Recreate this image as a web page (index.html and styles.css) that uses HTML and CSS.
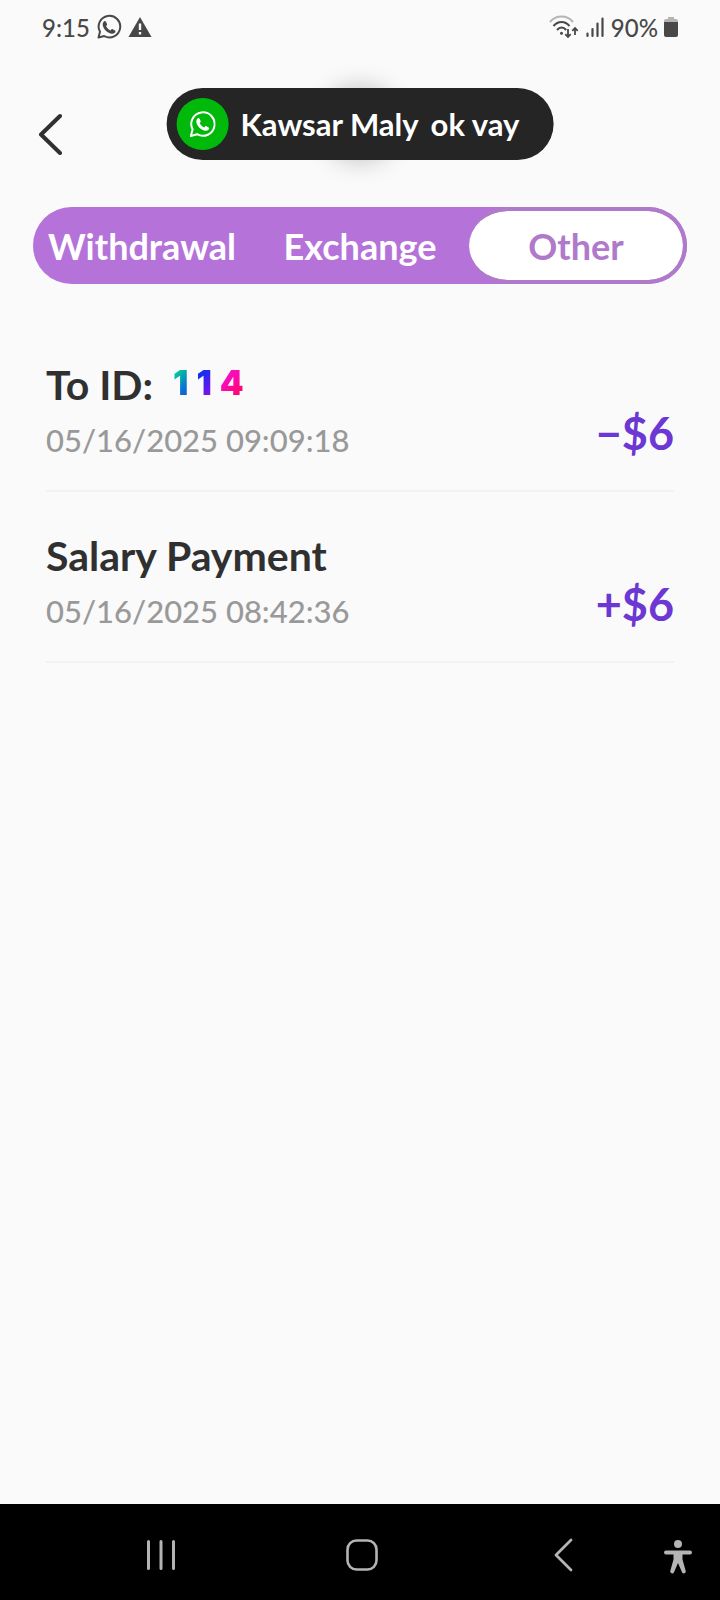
FILE: index.html
```html
<!DOCTYPE html>
<html lang="en">
<head>
<meta charset="utf-8">
<meta name="viewport" content="width=device-width, initial-scale=1">
<title>Records</title>
<link rel="stylesheet" href="styles.css">
</head>
<body>
<div class="status-bar">
  <div class="status-group">
    <span class="clock">9:15</span>
    <svg class="icon" width="26" height="26" viewBox="0 0 26 26" fill="none">
      <path d="M2.5 23.5 L4 17.8 A10.8 10.8 0 1 1 8.2 22 Z" stroke="currentColor" stroke-width="2" stroke-linejoin="round"/>
      <path d="M7.3 8.2c.8-1.5 2-1.8 2.700-.5l1 2.300c.3.800-.2 1.300-1 2 1.200 2.300 2.500 3.500 4.700 4.400.8-1 1.200-1.500 2-1.200l2.300 1.200c.8.500.6 1.500-.2 2.300-1.500 1.500-3.800 1.300-6.500-.2-3.200-1.800-7.100-6.800-5-10.300z" fill="currentColor"/>
    </svg>
    <svg class="icon" width="24" height="22" viewBox="0 0 24 22">
      <path d="M12 1 23.500 21H.5Z" fill="currentColor"/>
      <path d="M10.800 7.500h2.400v6.500h-2.400zM10.800 16h2.400v2.400h-2.400z" fill="#fafafa"/>
    </svg>
  </div>
  <div class="status-group">
    <svg class="icon" width="30" height="24" viewBox="0 0 30 24" fill="none" stroke="currentColor" stroke-width="2">
      <path d="M1 7C7-.2 18-.2 24 7" stroke="#b4b4b4"/>
      <path d="M4.500 11c4.500-5.500 11.500-5.500 16 0M8 15c2.800-3.300 6.400-3.300 9.200 0"/>
      <circle cx="12.500" cy="18.300" r="1.500" fill="currentColor" stroke="none"/>
      <path d="M19 14v8M16.300 19.200 19 22l2.700-2.800M26 20v-7M23.300 15.800 26 13l2.700 2.800" stroke-width="1.800"/>
    </svg>
    <svg class="icon" width="20" height="22" viewBox="0 0 20 22" stroke="currentColor" stroke-width="2.200" stroke-linecap="round">
      <path d="M2.500 17.500V20M7.500 13v7M12.500 7.500V20M17.500 2.500V20"/>
    </svg>
    <span class="battery-level">90%</span>
    <svg class="icon" width="14" height="22" viewBox="0 0 14 22">
      <path d="M4 1h6v2h2a2 2 0 0 1 2 2v2H0V5a2 2 0 0 1 2-2h2z" fill="#b4b4b4"/>
      <path d="M0 6h14v13a2 2 0 0 1-2 2H2a2 2 0 0 1-2-2z" fill="currentColor"/>
    </svg>
  </div>
</div>

<header class="header">
  <button class="back" type="button" aria-label="Back">
    <svg width="26" height="42" viewBox="0 0 26 42" fill="none" stroke="#303030" stroke-width="4" stroke-linecap="round" stroke-linejoin="round"><path d="M22 3 3 21.500 22 40"/></svg>
  </button>
  <div class="toast" role="status">
    <span class="toast-icon">
      <svg width="26" height="26" viewBox="0 0 26 26" fill="none" color="#fff">
        <path d="M1.200 25 3 18.500A11.700 11.700 0 1 1 7.500 23.200Z" stroke="currentColor" stroke-width="2" stroke-linejoin="round"/>
        <path d="M7.300 8.200c.8-1.500 2-1.800 2.700-.5l1 2.300c.3.800-.2 1.300-1 2 1.200 2.300 2.500 3.500 4.700 4.400.8-1 1.200-1.500 2-1.200l2.300 1.200c.8.500.6 1.500-.2 2.300-1.500 1.500-3.800 1.300-6.500-.2-3.200-1.800-7.100-6.800-5-10.300z" fill="currentColor"/>
      </svg>
    </span>
    <span class="toast-text"><span>Kawsar Maly</span><span>ok vay</span></span>
  </div>
</header>

<main>
  <div class="tabs" role="tablist">
    <button class="tab" type="button" role="tab" aria-selected="false">Withdrawal</button>
    <button class="tab" type="button" role="tab" aria-selected="false">Exchange</button>
    <button class="tab tab-active" type="button" role="tab" aria-selected="true">Other</button>
  </div>
  <ul class="records">
    <li class="record">
      <div>
        <div class="record-title">To ID: <span class="user-id"><span class="digit-a">1</span><span class="digit-b">1</span><span class="digit-c">4</span></span></div>
        <time class="record-date">05/16/2025 09:09:18</time>
      </div>
      <span class="amount">−$6</span>
    </li>
    <li class="record">
      <div>
        <div class="record-title">Salary Payment</div>
        <time class="record-date">05/16/2025 08:42:36</time>
      </div>
      <span class="amount">+$6</span>
    </li>
  </ul>
</main>

<nav class="system-nav" aria-label="System">
  <button class="nav-button" type="button" aria-label="Recent apps">
    <svg width="30" height="32" viewBox="0 0 30 32" stroke="#b4b4b4" stroke-width="3" stroke-linecap="round"><path d="M2.500 2.500v27M15 2.500v27M27.500 2.500v27"/></svg>
  </button>
  <button class="nav-button" type="button" aria-label="Home">
    <svg width="32" height="32" viewBox="0 0 32 32" fill="none" stroke="#b4b4b4" stroke-width="2.600"><rect x="1.500" y="1.500" width="29" height="29" rx="9"/></svg>
  </button>
  <button class="nav-button" type="button" aria-label="Back">
    <svg width="20" height="34" viewBox="0 0 20 34" fill="none" stroke="#b4b4b4" stroke-width="2.800" stroke-linecap="round" stroke-linejoin="round"><path d="M18 2 3 17l15 15"/></svg>
  </button>
  <button class="nav-button nav-access" type="button" aria-label="Accessibility">
    <svg width="28" height="38" viewBox="0 0 28 38" fill="#b4b4b4"><circle cx="14" cy="8" r="4"/><path d="M2 14.500h24a2 2 0 0 1 0 4h-7.500v5l3.300 11.800a2 2 0 0 1-3.700 1.200L14 27l-4.100 9.500a2 2 0 0 1-3.700-1.200L9.500 23.500v-5H2a2 2 0 0 1 0-4z"/></svg>
  </button>
</nav>
</body>
</html>
```

FILE: styles.css
```css
* { box-sizing: border-box; }

body {
  margin: 0;
  min-height: 100vh;
  display: flex;
  flex-direction: column;
  background: #fafafa;
  color: #303030;
  font-family: "Choco Cooky", Lato, sans-serif;
  font-weight: 700;
}

button {
  margin: 0;
  padding: 0;
  border: 0;
  background: none;
  font: inherit;
  color: inherit;
}

svg { display: block; flex: none; }

.status-bar {
  height: 54px;
  padding: 0 42px;
  display: flex;
  justify-content: space-between;
  align-items: center;
  color: #484848;
  font-size: 24px;
  font-weight: 500;
}

.status-group {
  display: flex;
  align-items: center;
  gap: 6px;
}

.header {
  position: relative;
  height: 153px;
  padding: 6px 38px 0;
  display: flex;
  align-items: center;
}

.header::before {
  content: "";
  position: absolute;
  top: 38px;
  left: 50%;
  width: 64px;
  height: 64px;
  transform: translateX(-50%);
  border-radius: 50%;
  box-shadow: 0 0 24px 6px rgba(0, 0, 0, 0.22);
}

.toast {
  position: absolute;
  top: 34px;
  left: 50%;
  transform: translateX(-50%);
  height: 72px;
  padding: 0 34px 0 10px;
  display: flex;
  align-items: center;
  gap: 12px;
  border-radius: 36px;
  background: #252525;
  color: #fff;
  font-size: 31px;
  white-space: nowrap;
}

.toast-icon {
  width: 52px;
  height: 52px;
  display: grid;
  place-items: center;
  border-radius: 50%;
  background: #00b90a;
}

.toast-text { display: flex; gap: 12px; }

main { flex: 1; }

.tabs {
  height: 77px;
  margin: 0 33px;
  display: grid;
  grid-template-columns: repeat(3, 1fr);
  border-radius: 39px;
  background: #b573da;
  color: #fff;
  font-size: 36px;
}

.tab { border-radius: 39px; }

.tab-active {
  border: 4px solid #b07acb;
  border-left-width: 0;
  background: #fff;
  background-clip: padding-box;
  color: #b07acb;
}

.records {
  list-style: none;
  margin: 37px 46px 0;
  padding: 0;
}

.record {
  padding: 38px 0 21px;
  display: flex;
  justify-content: space-between;
  align-items: flex-end;
  border-bottom: 2px solid #f2f2f2;
}

.record-title {
  display: flex;
  align-items: center;
  gap: 20px;
  font-size: 41px;
  line-height: 52px;
}

.record-date {
  display: block;
  color: #999;
  font-size: 31px;
  font-weight: 500;
  line-height: 58px;
}

.user-id {
  display: flex;
  gap: 8px;
  font-family: Inter, sans-serif;
  font-size: 34px;
  font-weight: 900;
  line-height: 48px;
  padding-bottom: 4px;
}

.digit-a, .digit-b, .digit-c {
  background-clip: text;
  -webkit-background-clip: text;
  color: transparent;
}

.digit-a { background-image: linear-gradient(135deg, #00d890 20%, #0a78d0 60%, #1040e0); }
.digit-b { background-image: linear-gradient(135deg, #1030f0 30%, #5a18f0 60%, #a818d0); }
.digit-c { background-image: linear-gradient(135deg, #f010d8 25%, #ff0898 55%, #e81040); }

.amount {
  color: #6c37d3;
  font-size: 45px;
  line-height: 72px;
}

.system-nav {
  height: 96px;
  padding: 6px 0 0 60px;
  display: grid;
  grid-template-columns: repeat(3, 1fr) 56px;
  align-items: center;
  background: #000;
}

.nav-button {
  display: grid;
  place-items: center;
}

.nav-access { justify-items: start; }
```
